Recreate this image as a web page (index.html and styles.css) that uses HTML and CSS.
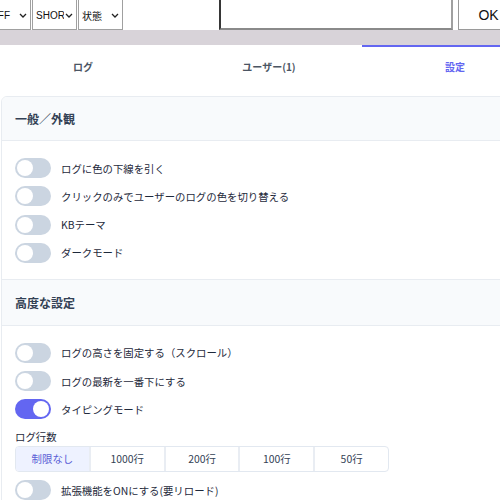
FILE: index.html
```html
<!DOCTYPE html>
<html lang="ja">
<head>
<meta charset="utf-8">
<link rel="stylesheet" href="styles.css">
</head>
<body>
<div class="topbar">
  <div class="sel"><span class="sel-text">OFF</span><svg class="chev" viewBox="0 0 8 5" width="8" height="5"><path d="M1 1l3 3 3-3" fill="none" stroke="#222" stroke-width="1.3"/></svg></div>
  <div class="sel"><span class="sel-text">SHORT</span><svg class="chev" viewBox="0 0 8 5" width="8" height="5"><path d="M1 1l3 3 3-3" fill="none" stroke="#222" stroke-width="1.3"/></svg></div>
  <div class="sel"><span class="sel-text">状態</span><svg class="chev" viewBox="0 0 8 5" width="8" height="5"><path d="M1 1l3 3 3-3" fill="none" stroke="#222" stroke-width="1.3"/></svg></div>
  <div class="spacer"></div>
  <input class="msg" type="text">
  <button class="ok">OK</button>
</div>
<div class="graybar"></div>
<nav class="tabs">
  <div class="tab">ログ</div>
  <div class="tab">ユーザー(1)</div>
  <div class="tab active">設定</div>
</nav>
<div class="card">
  <div class="sec-head">一般／外観</div>
  <div class="sec-body">
    <label class="row"><span class="tg"></span><span>ログに色の下線を引く</span></label>
    <label class="row"><span class="tg"></span><span>クリックのみでユーザーのログの色を切り替える</span></label>
    <label class="row"><span class="tg"></span><span>KBテーマ</span></label>
    <label class="row"><span class="tg"></span><span>ダークモード</span></label>
  </div>
  <div class="sec-head second">高度な設定</div>
  <div class="sec-body">
    <label class="row"><span class="tg"></span><span>ログの高さを固定する（スクロール）</span></label>
    <label class="row"><span class="tg"></span><span>ログの最新を一番下にする</span></label>
    <label class="row"><span class="tg on"></span><span>タイピングモード</span></label>
    <div class="field">
      <div class="field-label">ログ行数</div>
      <div class="btn-group">
        <div class="seg active">制限なし</div>
        <div class="seg">1000行</div>
        <div class="seg">200行</div>
        <div class="seg">100行</div>
        <div class="seg">50行</div>
      </div>
    </div>
    <label class="row"><span class="tg"></span><span>拡張機能をONにする(要リロード)</span></label>
  </div>
</div>
</body>
</html>
```
FILE: styles.css
```css
html, body {
  margin: 0;
  padding: 0;
  background: #fff;
  overflow: hidden;
}
body {
  font-family: "Noto Sans CJK JP", "Noto Sans", sans-serif;
  color: #1e293b;
}
.topbar {
  display: flex;
  height: 34px;
  margin-top: -4px;
  margin-left: -14px;
}
.topbar > * {
  flex: none;
}
.sel {
  box-sizing: border-box;
  width: 45px;
  height: 34px;
  margin-right: 1px;
  padding: 4px 3px 0 3px;
  display: flex;
  align-items: center;
  gap: 1px;
  border: 1px solid #a0a0a0;
  background: #fff;
  font-family: "Liberation Sans", "Noto Sans CJK JP", sans-serif;
  font-size: 10px;
  color: #111;
  overflow: hidden;
}
.sel-text {
  flex: 1;
  min-width: 0;
  overflow: hidden;
  white-space: nowrap;
  text-overflow: clip;
}
.chev {
  flex: none;
}
.spacer {
  width: 95px;
}
.msg {
  width: 234px;
  height: 34px;
  box-sizing: border-box;
  margin: 0;
  border: 2px inset #8a8a8a;
  border-right-color: #a0a0a0;
  background: #fff;
}
.ok {
  width: 60px;
  height: 34px;
  margin: 0 0 0 5px;
  box-sizing: border-box;
  border: 1px solid #9a9a9a;
  border-right: none;
  background: #fff;
  font-family: "Liberation Sans", sans-serif;
  font-size: 14px;
  color: #111;
  padding: 3px 0 0 0;
}
.graybar {
  height: 15px;
  background: #d8d3d9;
}
.tabs {
  display: flex;
  width: 558px;
  margin-left: -10px;
  margin-bottom: 5px;
}
.tab {
  flex: 1;
  height: 44px;
  line-height: 40px;
  text-align: center;
  border-top: 2px solid transparent;
  font-size: 10px;
  font-weight: 700;
  color: #4b5563;
}
.tab.active {
  border-top-color: #6366f1;
  color: #6366f1;
}
.card {
  margin: 0 0 0 1px;
  width: 560px;
  border: 1px solid #e8ecf1;
  border-radius: 6px;
  overflow: hidden;
}
.sec-head {
  height: 44px;
  display: flex;
  align-items: center;
  padding-left: 13px;
  background: #f8fafc;
  border-bottom: 1px solid #e8ecf1;
  font-size: 12px;
  font-weight: 700;
  color: #334155;
}
.sec-head:first-child {
  height: 43px;
}
.sec-head.second {
  border-top: 1px solid #e8ecf1;
  height: 45px;
}
.sec-body {
  display: flex;
  flex-direction: column;
  gap: 8.3px;
  padding: 17px 13px 16px;
}
.row {
  display: flex;
  align-items: center;
  gap: 10px;
  height: 20px;
  font-size: 10.4px;
  color: #1e293b;
}
.tg {
  position: relative;
  flex: none;
  width: 36px;
  height: 20px;
  border-radius: 10px;
  background: #cbd5e1;
}
.tg::after {
  content: "";
  position: absolute;
  top: 2px;
  left: 2px;
  width: 16px;
  height: 16px;
  border-radius: 50%;
  background: #fff;
}
.tg.on {
  background: #6366f1;
}
.tg.on::after {
  left: 18px;
}
.field {
  display: flex;
  flex-direction: column;
}
.field-label {
  height: 18px;
  line-height: 18px;
  font-size: 10.4px;
  color: #1e293b;
}
.btn-group {
  display: flex;
  width: 374px;
  height: 26px;
  box-sizing: border-box;
  border: 1px solid #e2e8f0;
  border-radius: 4px;
  overflow: hidden;
}
.seg {
  flex: 1;
  display: flex;
  align-items: center;
  justify-content: center;
  font-size: 10.4px;
  color: #334155;
  border-left: 2px solid #e9edf3;
}
.seg:first-child {
  border-left: none;
}
.seg.active {
  background: #eef2ff;
  color: #5b5fd6;
}
```
